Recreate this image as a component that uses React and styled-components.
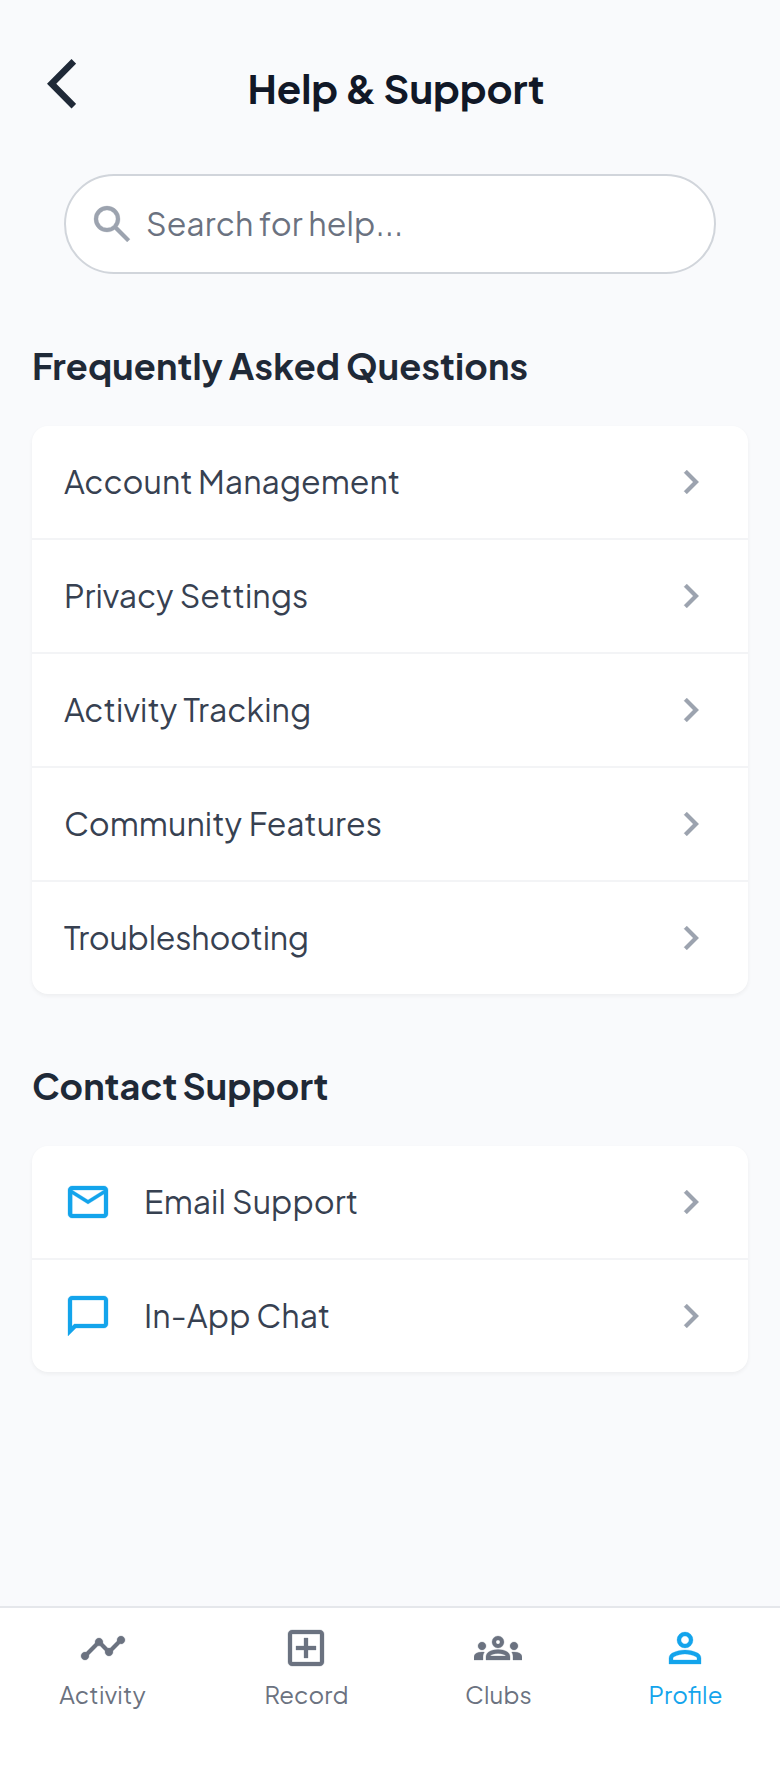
import React from 'react';
import styled, { createGlobalStyle } from 'styled-components';

const GlobalStyle = createGlobalStyle`
  *, *::before, *::after { box-sizing: border-box; }
  body {
    margin: 0;
    background: #f9fafb;
    font-family: 'Plus Jakarta Sans', Inter, 'Liberation Sans', sans-serif;
    font-feature-settings: 'liga' 1;
  }
`;

const Screen = styled.div`
  display: flex;
  flex-direction: column;
  width: 780px;
  height: 1768px;
  background: #f9fafc;
`;

const Header = styled.header`
  display: flex;
  align-items: flex-start;
  height: 142px;
  padding: 59px 47px 0;
`;

const BackButton = styled.button`
  display: flex;
  width: 48px;
  padding: 0;
  border: 0;
  background: none;
  color: #1f2937;
`;

const Title = styled.h1`
  flex: 1;
  margin: 4px 36px 0 0;
  text-align: center;
  font-size: 40px;
  line-height: 50px;
  font-weight: 700;
  white-space: nowrap;
  letter-spacing: -0.1px;
  color: #111827;
`;

const Main = styled.main`
  display: flex;
  flex-direction: column;
  flex: 1;
  padding: 32px 32px 0;
`;

const SearchField = styled.div`
  display: flex;
  align-items: center;
  gap: 10px;
  height: 100px;
  margin: 0 32px;
  padding: 0 22px;
  border: 2px solid #d1d5db;
  border-radius: 50px;
  background: #fff;
  color: #9ca3af;
`;

const Label = styled.span`
  padding-bottom: 2px;
  font-size: 32px;
  line-height: 48px;
  white-space: nowrap;
  letter-spacing: ${(p) => p.$track || 0}px;
  word-spacing: ${(p) => p.$wordGap || 0}px;
`;

const Placeholder = styled(Label)`
  color: #6b7280;
`;

const Section = styled.section`
  display: flex;
  flex-direction: column;
  gap: 32px;
  margin-top: 64px;
`;

const SectionTitle = styled.h2`
  margin: 0;
  font-size: 36px;
  line-height: 56px;
  font-weight: 700;
  white-space: nowrap;
  letter-spacing: ${(p) => p.$track || 0}px;
  word-spacing: ${(p) => p.$wordGap || 0}px;
  color: #1f2937;
`;

const Card = styled.div`
  overflow: hidden;
  border-radius: 16px;
  background: #fff;
  box-shadow: 0 2px 4px rgba(0, 0, 0, 0.05);
`;

const Row = styled.div`
  display: flex;
  align-items: center;
  gap: 32px;
  height: 114px;
  padding: 0 32px;
  border-bottom: 2px solid #f3f4f6;
  color: #374151;

  &:last-child {
    height: 112px;
    border-bottom: 0;
  }
`;

const LeadIcon = styled.span`
  display: flex;
  color: #13a4ec;
`;

const RowEnd = styled.span`
  display: flex;
  margin-left: auto;
  color: #9ca3af;
`;

const NavBar = styled.nav`
  display: flex;
  justify-content: space-around;
  height: 162px;
  padding-top: 16px;
  border-top: 2px solid #e5e7eb;
  background: #fff;
`;

const NavItem = styled.a`
  display: flex;
  flex-direction: column;
  align-items: center;
  gap: 6px;
  width: ${(p) => p.$width}px;
  color: ${(p) => (p.$active ? '#13a4ec' : '#6b7280')};
`;

const NavLabel = styled.span`
  padding-left: ${(p) => p.$indent || 0}px;
  font-size: 24px;
  line-height: 32px;
  white-space: nowrap;
  letter-spacing: ${(p) => p.$track || 0}px;
`;

const Glyph = styled.svg`
  display: block;
  width: 48px;
  height: 48px;
  fill: currentColor;
  stroke: currentColor;
  stroke-width: 0.15;
`;

const paths = {
  search:
    'M19.6 21l-6.3-6.3q-.75.6-1.725.95T9.5 16q-2.725 0-4.612-1.888T3 9.5t1.888-4.612T9.5 3t4.613 1.888T16 9.5q0 1.1-.35 2.075T14.7 13.3l6.3 6.3zM9.5 14q1.875 0 3.188-1.312T14 9.5t-1.312-3.187T9.5 5 6.313 6.313 5 9.5t1.313 3.188T9.5 14',
  chevron: 'M12.6 12L8 7.4 9.4 6l6 6-6 6L8 16.6z',
  mail:
    'M4 20q-.825 0-1.412-.587T2 18V6q0-.825.588-1.412T4 4h16q.825 0 1.413.588T22 6v12q0 .825-.587 1.413T20 20zm8-7L4 8v10h16V8zm0-2l8-5H4zM4 8V6v12z',
  chat:
    'M2 22V4q0-.825.588-1.412T4 2h16q.825 0 1.413.588T22 4v12q0 .825-.587 1.413T20 18H6zm3.15-6H20V4H4v13.125z',
  activity:
    'M23 8c0 1.1-.9 2-2 2-.18 0-.35-.02-.51-.07l-3.56 3.55c.05.16.07.34.07.52 0 1.1-.9 2-2 2s-2-.9-2-2c0-.18.02-.36.07-.52l-2.55-2.55c-.16.05-.34.07-.52.07s-.36-.02-.52-.07l-4.55 4.56c.05.16.07.33.07.51 0 1.1-.9 2-2 2s-2-.9-2-2 .9-2 2-2c.18 0 .35.02.51.07l4.56-4.55C8.02 9.36 8 9.18 8 9c0-1.1.9-2 2-2s2 .9 2 2c0 .18-.02.36-.07.52l2.55 2.55c.16-.05.34-.07.52-.07s.36.02.52.07l3.55-3.56C19.02 8.35 19 8.18 19 8c0-1.1.9-2 2-2s2 .9 2 2z',
  record:
    'M11 17h2v-4h4v-2h-4V7h-2v4H7v2h4zm-6 4q-.825 0-1.412-.587T3 19V5q0-.825.588-1.412T5 3h14q.825 0 1.413.588T21 5v14q0 .825-.587 1.413T19 21zm0-2h14V5H5z',
  clubs:
    'M0 18v-1.575q0-1.075 1.1-1.75T4 14q.325 0 .625.013t.575.062q-.35.525-.525 1.1t-.175 1.2V18zm6 0v-1.625q0-.8.438-1.463t1.237-1.162T9.588 13 12 12.75q1.325 0 2.438.25t1.912.75 1.225 1.163.425 1.462V18zm13.5 0v-1.625q0-.65-.162-1.225t-.488-1.075q.275-.05.563-.062T20 14q1.8 0 2.9.663t1.1 1.762V18zM8.125 16H15.9q-.25-.5-1.387-.875T12 14.75t-2.512.375T8.125 16M4 13q-.825 0-1.412-.587T2 11q0-.85.588-1.425T4 9q.85 0 1.425.575T6 11q0 .825-.575 1.413T4 13m16 0q-.825 0-1.412-.587T18 11q0-.85.588-1.425T20 9q.85 0 1.425.575T22 11q0 .825-.575 1.413T20 13m-8-1q-1.25 0-2.125-.875T9 9q0-1.275.875-2.137T12 6q1.275 0 2.138.863T15 9q0 1.25-.862 2.125T12 12m0-2q.425 0 .713-.288T13 9t-.288-.712T12 8t-.712.288T11 9t.288.713T12 10',
  profile:
    'M12 12q-1.65 0-2.825-1.175T8 8t1.175-2.825T12 4t2.825 1.175T16 8t-1.175 2.825T12 12m-8 8v-2.8q0-.85.438-1.562T5.6 14.55q1.55-.775 3.15-1.162T12 13t3.25.388 3.15 1.162q.725.375 1.163 1.088T20 17.2V20zm2-2h12v-.8q0-.275-.137-.5t-.363-.35q-1.35-.675-2.725-1.012T12 15t-2.775.338T6.5 16.35q-.225.125-.363.35T6 17.2zm6-8q.825 0 1.413-.587T14 8t-.587-1.412T12 6t-1.412.588T10 8t.588 1.413T12 10',
};

function Icon({ name }) {
  return (
    <Glyph viewBox="0 0 24 24" aria-hidden="true">
      <path fillRule="evenodd" d={paths[name]} />
    </Glyph>
  );
}

const topics = [
  { label: 'Account Management', track: 0 },
  { label: 'Privacy Settings', track: 0.03, wordGap: 0.7 },
  { label: 'Activity Tracking', track: 0.06, wordGap: 1 },
  { label: 'Community Features', track: 0.06, wordGap: 1.4 },
  { label: 'Troubleshooting', track: -0.24 },
];

const contacts = [
  { label: 'Email Support', icon: 'mail', track: 0.05, wordGap: 0.6 },
  { label: 'In-App Chat', icon: 'chat', track: 0.11 },
];

const tabs = [
  { label: 'Activity', icon: 'activity', width: 88, track: 0.26 },
  { label: 'Record', icon: 'record', width: 84, track: 0.1, indent: 2 },
  { label: 'Clubs', icon: 'clubs', width: 66, track: 0.15, indent: 2 },
  { label: 'Profile', icon: 'profile', width: 74, track: 0.2, indent: 2, active: true },
];

function ListCard({ items }) {
  return (
    <Card>
      {items.map((item) => (
        <Row key={item.label}>
          {item.icon && (
            <LeadIcon>
              <Icon name={item.icon} />
            </LeadIcon>
          )}
          <Label $track={item.track} $wordGap={item.wordGap}>
            {item.label}
          </Label>
          <RowEnd>
            <Icon name="chevron" />
          </RowEnd>
        </Row>
      ))}
    </Card>
  );
}

export default function App() {
  return (
    <>
      <GlobalStyle />
      <Screen>
        <Header>
          <BackButton aria-label="Back">
            <svg width="29.2" height="49.5" viewBox="0 2.1 11.67 19.8" fill="currentColor">
              <path d="M11.67 3.97L9.8 2.1 0 12l9.8 9.9 1.87-1.87L3.7 12z" />
            </svg>
          </BackButton>
          <Title>Help &amp; Support</Title>
        </Header>
        <Main>
          <SearchField>
            <Icon name="search" />
            <Placeholder $track={0.12}>Search for help...</Placeholder>
          </SearchField>
          <Section>
            <SectionTitle $track={0.14} $wordGap={-0.7}>
              Frequently Asked Questions
            </SectionTitle>
            <ListCard items={topics} />
          </Section>
          <Section>
            <SectionTitle $track={0.1} $wordGap={-1.5}>
              Contact Support
            </SectionTitle>
            <ListCard items={contacts} />
          </Section>
        </Main>
        <NavBar>
          {tabs.map((tab) => (
            <NavItem key={tab.label} $width={tab.width} $active={tab.active}>
              <Icon name={tab.icon} />
              <NavLabel $track={tab.track} $indent={tab.indent}>
                {tab.label}
              </NavLabel>
            </NavItem>
          ))}
        </NavBar>
      </Screen>
    </>
  );
}
